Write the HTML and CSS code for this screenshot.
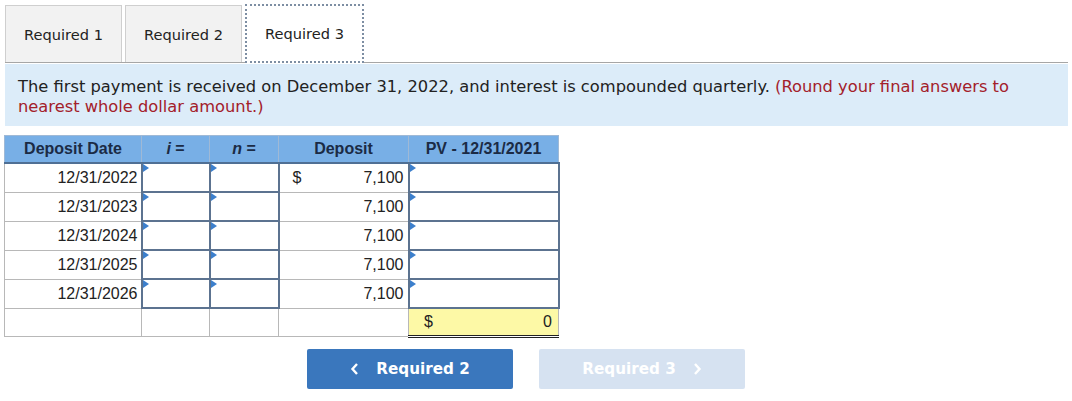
FILE: index.html
```html
<!DOCTYPE html>
<html lang="en">
<head>
  <meta charset="UTF-8">
  <title>Required 3</title>
  <link rel="stylesheet" href="styles.css">
</head>
<body>
  <div class="tabs">
    <div class="tab">Required 1</div>
    <div class="tab">Required 2</div>
    <div class="tab active">Required 3</div>
  </div>

  <div class="prompt">
    The first payment is received on December 31, 2022, and interest is compounded quarterly.
    <span class="hint">(Round your final answers to nearest whole dollar amount.)</span>
  </div>

  <table class="sheet">
    <thead>
      <tr>
        <th class="c-date">Deposit Date</th>
        <th class="c-i"><em>i</em> =</th>
        <th class="c-n"><em>n</em> =</th>
        <th class="c-dep">Deposit</th>
        <th class="c-pv">PV - 12/31/2021</th>
      </tr>
    </thead>
    <tbody>
      <tr>
        <td class="date">12/31/2022</td>
        <td class="inp"></td>
        <td class="inp"></td>
        <td class="money"><span class="cur">$</span>7,100</td>
        <td class="inp"></td>
      </tr>
      <tr>
        <td class="date">12/31/2023</td>
        <td class="inp"></td>
        <td class="inp"></td>
        <td class="money">7,100</td>
        <td class="inp"></td>
      </tr>
      <tr>
        <td class="date">12/31/2024</td>
        <td class="inp"></td>
        <td class="inp"></td>
        <td class="money">7,100</td>
        <td class="inp"></td>
      </tr>
      <tr>
        <td class="date">12/31/2025</td>
        <td class="inp"></td>
        <td class="inp"></td>
        <td class="money">7,100</td>
        <td class="inp"></td>
      </tr>
      <tr>
        <td class="date">12/31/2026</td>
        <td class="inp"></td>
        <td class="inp"></td>
        <td class="money">7,100</td>
        <td class="inp"></td>
      </tr>
      <tr class="total">
        <td></td>
        <td></td>
        <td></td>
        <td></td>
        <td class="money sum"><span class="cur">$</span>0</td>
      </tr>
    </tbody>
  </table>

  <div class="nav">
    <button class="btn prev">
      <svg class="chev" width="10" height="14" viewBox="0 0 10 14"><polyline points="7,2 2.5,7 7,12" /></svg>
      Required 2
    </button>
    <button class="btn next" disabled>
      Required 3
      <svg class="chev" width="10" height="14" viewBox="0 0 10 14"><polyline points="3,2 7.5,7 3,12" /></svg>
    </button>
  </div>
</body>
</html>
```

FILE: styles.css
```css
body {
  margin: 0;
  padding: 4px 4px 0 4px;
  font-family: "DejaVu Sans", Verdana, sans-serif;
  color: #222;
  background: #fff;
}

/* Tabs */
.tabs {
  display: flex;
  gap: 3px;
  margin-left: 1px;
  border-bottom: 1px solid #a6a6a6;
  height: 58px;
}

.tab {
  width: 115px;
  margin-top: 1px;
  background: #f2f2f2;
  border: 1px solid #cfcfcf;
  border-bottom: none;
  font-size: 14.6px;
  display: flex;
  align-items: center;
  justify-content: center;
  color: #222;
}

.tab.active {
  margin-top: 0;
  background: #fff;
  border: 2px dotted #7d8ea3;
  margin-bottom: -1px;
}

/* Prompt */
.prompt {
  margin: 1px 0 0 1px;
  background: #dcecf9;
  padding: 13px 14px 9px 13px;
  font-size: 16.3px;
  line-height: 20px;
  color: #222;
}

.hint {
  color: #a3202a;
}

/* Table */
.sheet {
  margin-top: 9px;
  border-collapse: collapse;
  font-family: "Liberation Sans", Arial, sans-serif;
  font-size: 16px;
  border: 1px solid #9a9a9a;
}

.sheet th {
  background: #78afe6;
  color: #1b2b45;
  font-weight: bold;
  height: 26px;
  padding: 0;
  border: 1px solid #9fb9d6;
  border-bottom: 2px solid #4f6f94;
}

.sheet th em {
  font-style: italic;
}

.c-date { width: 136px; }
.c-i { width: 67px; }
.c-n { width: 68px; }
.c-dep { width: 129px; }
.c-pv { width: 149px; }

.sheet td {
  height: 27px;
  padding: 0 4px;
  border: 1px solid #b8b8b8;
  position: relative;
}

.sheet td.date {
  text-align: right;
  padding-right: 3px;
}

.sheet td.money {
  text-align: right;
  padding-right: 4px;
}

.cur {
  float: left;
  padding-left: 9px;
}

.sheet td.inp {
  border: 2px solid #5c7390;
}

.sheet td.inp::before {
  content: "";
  position: absolute;
  top: 0;
  left: 0;
  border-top: 4px solid transparent;
  border-bottom: 4px solid transparent;
  border-left: 6px solid #3c7fcc;
}

.total td {
  height: 26px;
}

.sheet td.sum {
  background: #fdf9a6;
  border-bottom: 3px double #222;
  padding-right: 6px;
}

.sum .cur {
  padding-left: 11px;
}

/* Nav buttons */
.nav {
  display: flex;
  gap: 26px;
  margin: 11px 0 0 303px;
}

.btn {
  width: 206px;
  height: 40px;
  border: none;
  border-radius: 2px;
  font-family: "DejaVu Sans", Verdana, sans-serif;
  font-size: 15.2px;
  font-weight: bold;
  color: #fff;
  padding: 0;
  display: flex;
  align-items: center;
  justify-content: center;
  gap: 16px;
}

.btn.prev {
  background: #3a77bd;
}

.btn.next {
  background: #d6e2f1;
  color: #fff;
}

.chev polyline {
  fill: none;
  stroke: #fff;
  stroke-width: 2.4;
}
```
